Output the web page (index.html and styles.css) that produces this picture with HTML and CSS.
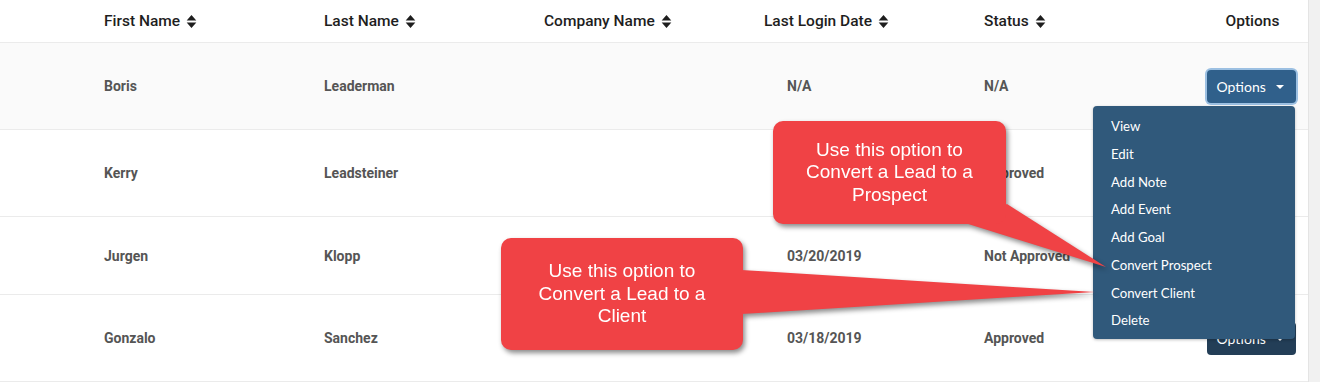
FILE: index.html
```html
<!DOCTYPE html>
<html>
<head>
<meta charset="utf-8">
<link rel="stylesheet" href="styles.css">
</head>
<body>
<div class="page">
  <div class="main">
    <div class="row head">
      <div class="cell">First Name <svg class="sort" viewBox="0 0 10 14"><path d="M0.5 6 L5 1 L9.5 6 Z M0.5 8 L9.5 8 L5 13 Z"/></svg></div>
      <div class="cell">Last Name <svg class="sort" viewBox="0 0 10 14"><path d="M0.5 6 L5 1 L9.5 6 Z M0.5 8 L9.5 8 L5 13 Z"/></svg></div>
      <div class="cell">Company Name <svg class="sort" viewBox="0 0 10 14"><path d="M0.5 6 L5 1 L9.5 6 Z M0.5 8 L9.5 8 L5 13 Z"/></svg></div>
      <div class="cell">Last Login Date <svg class="sort" viewBox="0 0 10 14"><path d="M0.5 6 L5 1 L9.5 6 Z M0.5 8 L9.5 8 L5 13 Z"/></svg></div>
      <div class="cell">Status <svg class="sort" viewBox="0 0 10 14"><path d="M0.5 6 L5 1 L9.5 6 Z M0.5 8 L9.5 8 L5 13 Z"/></svg></div>
      <div class="cell opt">Options</div>
    </div>
    <div class="row data r1 shade">
      <div class="cell">Boris</div>
      <div class="cell">Leaderman</div>
      <div class="cell"></div>
      <div class="cell date">N/A</div>
      <div class="cell">N/A</div>
      <div class="cell opt"><button class="btn focus">Options <span class="caret"></span></button></div>
    </div>
    <div class="row data r2">
      <div class="cell">Kerry</div>
      <div class="cell">Leadsteiner</div>
      <div class="cell"></div>
      <div class="cell date"></div>
      <div class="cell">Approved</div>
      <div class="cell opt"></div>
    </div>
    <div class="row data r3">
      <div class="cell">Jurgen</div>
      <div class="cell">Klopp</div>
      <div class="cell"></div>
      <div class="cell date">03/20/2019</div>
      <div class="cell">Not Approved</div>
      <div class="cell opt"></div>
    </div>
    <div class="row data r4">
      <div class="cell">Gonzalo</div>
      <div class="cell">Sanchez</div>
      <div class="cell"></div>
      <div class="cell date">03/18/2019</div>
      <div class="cell">Approved</div>
      <div class="cell opt"><button class="btn dark">Options <span class="caret"></span></button></div>
    </div>

    <ul class="menu">
      <li>View</li>
      <li>Edit</li>
      <li>Add Note</li>
      <li>Add Event</li>
      <li>Add Goal</li>
      <li>Convert Prospect</li>
      <li>Convert Client</li>
      <li>Delete</li>
    </ul>

    <div class="callout c1">
      <svg class="tail" width="1320" height="382" viewBox="0 0 1320 382"><polygon points="1007,204 965,223 1106,267"/></svg>
      <div class="bubble">Use this option to<br>Convert a Lead to a<br>Prospect</div>
    </div>
    <div class="callout c2">
      <svg class="tail" width="1320" height="382" viewBox="0 0 1320 382"><polygon points="741,270 741,314 1095,292"/></svg>
      <div class="bubble">Use this option to<br>Convert a Lead to a<br>Client</div>
    </div>
  </div>
  <div class="track"></div>
</div>
</body>
</html>
```

FILE: styles.css
```css
* { box-sizing: border-box; }
html, body { margin: 0; padding: 0; }
body {
  width: 1320px;
  height: 382px;
  overflow: hidden;
  background: #fff;
  font-family: Roboto, "Liberation Sans", sans-serif;
}
.page {
  display: flex;
  width: 1320px;
  height: 382px;
}
.main {
  position: relative;
  width: 1308px;
  flex: none;
}
.track {
  flex: 1;
  background: #f1f1f1;
  border-left: 1px solid #e4e4e4;
}
.row {
  display: grid;
  grid-template-columns: 220px 220px 220px 220px 220px 94px;
  padding-left: 104px;
  align-items: center;
  border-bottom: 1px solid #ebebeb;
}
.head {
  height: 43px;
  font-size: 15.5px;
  font-weight: 500;
  color: #1e1e1e;
}
.head .cell {
  display: flex;
  align-items: center;
  gap: 6px;
}
.head .cell.opt { justify-content: center; padding-left: 3px; }
.sort {
  width: 11px;
  height: 15px;
  fill: #1e1e1e;
}
.data {
  font-size: 14px;
  font-weight: 700;
  color: #555;
}
.shade { background: #fafafa; }
.r1 { height: 87px; }
.r2 { height: 87px; }
.r3 { height: 78px; }
.r4 { height: 87px; }
.data .date { padding-left: 23px; }
.data .opt {
  display: flex;
  justify-content: center;
}
.btn {
  width: 89px;
  height: 33px;
  border: 0;
  border-radius: 4px;
  background: #30608b;
  color: #fff;
  font-family: Lato, "Open Sans", sans-serif;
  font-size: 14px;
  padding: 0 0 0 10px;
  display: flex;
  align-items: center;
  justify-content: flex-start;
  gap: 10px;
}
.btn.focus { box-shadow: 0 0 0 2px #9cc0e2; }
.btn.dark { background: #233e57; }
.caret {
  width: 0;
  height: 0;
  border-left: 4.5px solid transparent;
  border-right: 4.5px solid transparent;
  border-top: 4.5px solid #fff;
  margin-top: 2px;
}
.menu {
  position: absolute;
  left: 1093px;
  top: 106px;
  width: 202px;
  height: 233px;
  margin: 0;
  padding: 7px 0 4px;
  list-style: none;
  background: #30597b;
  border-radius: 4px;
  box-shadow: 0 1px 3px rgba(0,0,0,0.25);
  font-family: Lato, "Open Sans", sans-serif;
  font-size: 13.2px;
  color: #fff;
}
.menu li {
  height: 27.75px;
  line-height: 27.75px;
  padding-left: 18px;
}
.callout {
  position: absolute;
  left: 0;
  top: 0;
  width: 1308px;
  height: 382px;
  filter: drop-shadow(2px 3px 2.5px rgba(0,0,0,0.45));
  pointer-events: none;
}
.tail {
  position: absolute;
  left: 0;
  top: 0;
  fill: #f04245;
}
.bubble {
  position: absolute;
  background: #f04245;
  border-radius: 10px;
  color: #fff;
  font-family: "Liberation Sans", Arial, sans-serif;
  font-size: 19px;
  line-height: 22.5px;
  text-align: center;
  display: flex;
  align-items: center;
  justify-content: center;
}
.c1 .bubble {
  left: 773px;
  top: 121px;
  width: 233px;
  height: 103px;
}
.c2 .bubble {
  left: 501px;
  top: 238px;
  width: 242px;
  height: 112px;
}
```
